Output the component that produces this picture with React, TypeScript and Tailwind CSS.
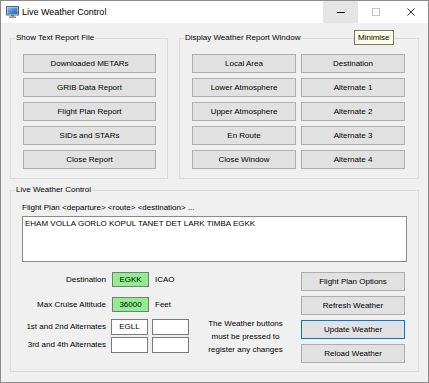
import React from "react";

function Btn({ label, w, focus }: { label: string; w: string; focus?: boolean }) {
  return (
    <div
      className={`${w} h-[19px] flex items-center justify-center bg-[#e1e1e1] border ${
        focus ? "border-[#0078d7]" : "border-[#adadad]"
      }`}
    >
      {label}
    </div>
  );
}

function Field({ value, green }: { value?: string; green?: boolean }) {
  return (
    <div
      className={`w-[37px] h-[16px] flex items-center justify-center border border-[#7a7a7a] ${
        green ? "bg-[#90ee90]" : "bg-white"
      }`}
    >
      {value}
    </div>
  );
}

function TitleBar() {
  return (
    <div className="h-[22px] bg-white flex items-stretch">
      <div className="flex items-center pl-[5px]">
        <svg width="13" height="12" viewBox="0 0 13 12">
          <defs>
            <linearGradient id="scr" x1="0" y1="0" x2="1" y2="1">
              <stop offset="0" stopColor="#7fc0f5" />
              <stop offset="1" stopColor="#1a62c8" />
            </linearGradient>
          </defs>
          <rect x="0.5" y="0.5" width="12" height="8.5" fill="#d8dde4" stroke="#5a6572" />
          <rect x="1.5" y="1.5" width="10" height="6.5" fill="url(#scr)" />
          <rect x="5" y="9" width="3" height="1.5" fill="#6b7480" />
          <rect x="3" y="10.5" width="7" height="1.5" fill="#8a929c" />
        </svg>
        <span className="ml-[3px] text-[9px] font-['Liberation_Sans',Arial,sans-serif]">Live Weather Control</span>
      </div>
      <div className="ml-auto flex">
        <div className="w-[35px] bg-[#e5e5e5] flex items-center justify-center">
          <svg width="10" height="10" viewBox="0 0 10 10">
            <line x1="1" y1="5.5" x2="9" y2="5.5" stroke="#000" strokeWidth="1" />
          </svg>
        </div>
        <div className="w-[35px] flex items-center justify-center">
          <svg width="10" height="10" viewBox="0 0 10 10">
            <rect x="1.5" y="1.5" width="7" height="7" fill="none" stroke="#c4c4c4" strokeWidth="1" />
          </svg>
        </div>
        <div className="w-[35px] flex items-center justify-center">
          <svg width="10" height="10" viewBox="0 0 10 10">
            <path d="M1.5 1.5 L8.5 8.5 M8.5 1.5 L1.5 8.5" stroke="#111" strokeWidth="0.9" />
          </svg>
        </div>
      </div>
    </div>
  );
}

export default function App() {
  return (
    <div className="relative w-[429px] h-[383px] border border-[#8c8c8c] bg-[#f0f0f0] flex flex-col font-['Liberation_Sans',Arial,sans-serif] text-[8px] leading-[12px] text-black">
      <TitleBar />
      <div className="flex flex-col pl-[9px]">
        <div className="flex mt-[9px] gap-[11px]">
          <fieldset className="w-[158px] h-[147px] border border-[#dcdcdc] p-0 m-0 min-w-0">
            <legend className="ml-[4px] px-[1px]">Show Text Report File</legend>
            <div className="flex flex-col gap-[5px] pl-[12px] pt-[10px]">
              <Btn w="w-[133px]" label="Downloaded METARs" />
              <Btn w="w-[133px]" label="GRIB Data Report" />
              <Btn w="w-[133px]" label="Flight Plan Report" />
              <Btn w="w-[133px]" label="SIDs and STARs" />
              <Btn w="w-[133px]" label="Close Report" />
            </div>
          </fieldset>
          <fieldset className="w-[240px] h-[147px] border border-[#dcdcdc] p-0 m-0 min-w-0">
            <legend className="ml-[4px] px-[1px]">Display Weather Report Window</legend>
            <div className="grid grid-cols-[104px_104px] gap-x-[5px] gap-y-[5px] pl-[12px] pt-[10px]">
              <Btn w="w-[104px]" label="Local Area" />
              <Btn w="w-[104px]" label="Destination" />
              <Btn w="w-[104px]" label="Lower Atmosphere" />
              <Btn w="w-[104px]" label="Alternate 1" />
              <Btn w="w-[104px]" label="Upper Atmosphere" />
              <Btn w="w-[104px]" label="Alternate 2" />
              <Btn w="w-[104px]" label="En Route" />
              <Btn w="w-[104px]" label="Alternate 3" />
              <Btn w="w-[104px]" label="Close Window" />
              <Btn w="w-[104px]" label="Alternate 4" />
            </div>
          </fieldset>
        </div>

        <fieldset className="mt-[5px] w-[409px] h-[188px] border border-[#dcdcdc] p-0 m-0 min-w-0">
          <legend className="ml-[4px] px-[1px]">Live Weather Control</legend>
          <div className="flex flex-col pl-[11px] pt-[6px]">
            <div>Flight Plan &lt;departure&gt; &lt;route&gt; &lt;destination&gt; ...</div>
            <div className="mt-[2px] w-[385px] h-[46px] bg-white border border-[#8a8a8a] px-[2px] pt-[1px]">
              EHAM VOLLA GORLO KOPUL TANET DET LARK TIMBA EGKK
            </div>
            <div className="flex mt-[10px]">
              <div className="flex flex-col w-[168px]">
                <div className="flex items-center h-[15px]">
                  <div className="w-[84px] text-right">Destination</div>
                  <div className="ml-[6px]">
                    <div className="w-[37px] h-[15px] flex items-center justify-center border border-[#7a7a7a] bg-[#90ee90]">EGKK</div>
                  </div>
                  <div className="ml-[6px]">ICAO</div>
                </div>
                <div className="flex items-center h-[15px] mt-[10px]">
                  <div className="w-[84px] text-right">Max Cruise Altitude</div>
                  <div className="ml-[6px]">
                    <div className="w-[37px] h-[15px] flex items-center justify-center border border-[#7a7a7a] bg-[#90ee90]">36000</div>
                  </div>
                  <div className="ml-[6px]">Feet</div>
                </div>
                <div className="flex items-center mt-[7px]">
                  <div className="w-[84px] text-right">1st and 2nd Alternates</div>
                  <div className="ml-[5px] flex gap-[4px]">
                    <Field value="EGLL" />
                    <Field />
                  </div>
                </div>
                <div className="flex items-center mt-[2px]">
                  <div className="w-[84px] text-right">3rd and 4th Alternates</div>
                  <div className="ml-[5px] flex gap-[4px]">
                    <Field />
                    <Field />
                  </div>
                </div>
              </div>
              <div className="flex-1 text-center leading-[13px] mt-[45px]">
                The Weather buttons
                <br />
                must be pressed to
                <br />
                register any changes
              </div>
              <div className="flex flex-col gap-[5px] mr-[13px]">
                <Btn w="w-[104px]" label="Flight Plan Options" />
                <Btn w="w-[104px]" label="Refresh Weather" />
                <Btn w="w-[104px]" label="Update Weather" focus />
                <Btn w="w-[104px]" label="Reload Weather" />
              </div>
            </div>
          </div>
        </fieldset>
      </div>

      <div className="absolute left-[353px] top-[29px] h-[15px] px-[3px] flex items-center bg-[#ffffe1] border border-[#767676]">
        Minimise
      </div>
    </div>
  );
}
